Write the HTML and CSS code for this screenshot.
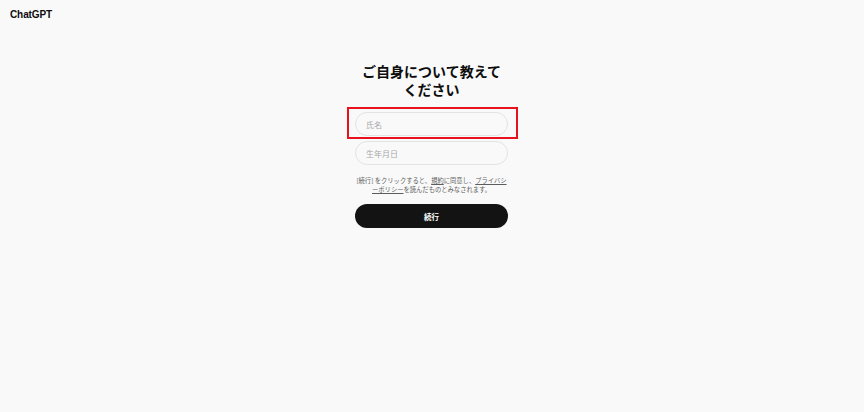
FILE: index.html
```html
<!DOCTYPE html>
<html lang="ja">
<head>
    <meta charset="UTF-8">
    <meta name="viewport" content="width=device-width, initial-scale=1.0">
    <title>ChatGPT</title>
    <link rel="stylesheet" href="styles.css">
</head>
<body>
    <header class="topbar">
        <span class="logo">ChatGPT</span>
    </header>

    <main class="page">
        <form class="about-form">
            <h1>ご自身について教えて<br>ください</h1>

            <div class="field highlight">
                <input type="text" placeholder="氏名">
            </div>
            <div class="field">
                <input type="text" placeholder="生年月日">
            </div>

            <p class="terms">[続行] をクリックすると、<a href="#">規約</a>に同意し、<a href="#">プライバシ<br>ーポリシー</a>を読んだものとみなされます。</p>

            <button type="submit">続行</button>
        </form>
    </main>
</body>
</html>
```

FILE: styles.css
```css
body {
    margin: 0;
    background: #f9f9f9;
    font-family: "Noto Sans CJK JP", "Noto Sans", sans-serif;
    color: #0d0d0d;
}
.topbar {
    height: 30px;
    padding: 9px 0 0 10px;
    box-sizing: border-box;
    font-family: "Liberation Sans", Arial, sans-serif;
    font-size: 10px;
    line-height: 12px;
}
.logo {
    font-weight: bold;
    letter-spacing: -0.1px;
}
.page {
    display: flex;
    justify-content: center;
}
.about-form {
    width: 153px;
    display: flex;
    flex-direction: column;
    align-items: stretch;
    margin-left: -1px;
}
h1 {
    margin: 32px -20px 14px;
    font-size: 14px;
    line-height: 18px;
    font-weight: bold;
    text-align: center;
}
.field {
    position: relative;
    margin-bottom: 5px;
}
.field input {
    display: block;
    width: 100%;
    height: 24px;
    box-sizing: border-box;
    border: 1px solid #e3e3e3;
    border-radius: 12px;
    background: #f9f9f9;
    padding: 0 10px;
    font-family: inherit;
    font-size: 8px;
    color: #333;
    outline: none;
}
.field input::placeholder {
    color: #a8a8a8;
}
.highlight::after {
    content: "";
    position: absolute;
    left: -8px;
    right: -10px;
    top: -5px;
    bottom: -3px;
    border: 2px solid #e8121e;
    pointer-events: none;
}
.terms {
    margin: 6px -4px 0;
    font-size: 6.3px;
    line-height: 9px;
    color: #5d5d5d;
    text-align: center;
}
.terms a {
    color: #5d5d5d;
    text-decoration: underline;
}
button {
    margin-top: 10px;
    height: 24px;
    border: none;
    border-radius: 12px;
    background: #131313;
    color: white;
    font-family: inherit;
    font-size: 7.5px;
    font-weight: bold;
    cursor: pointer;
}
```
